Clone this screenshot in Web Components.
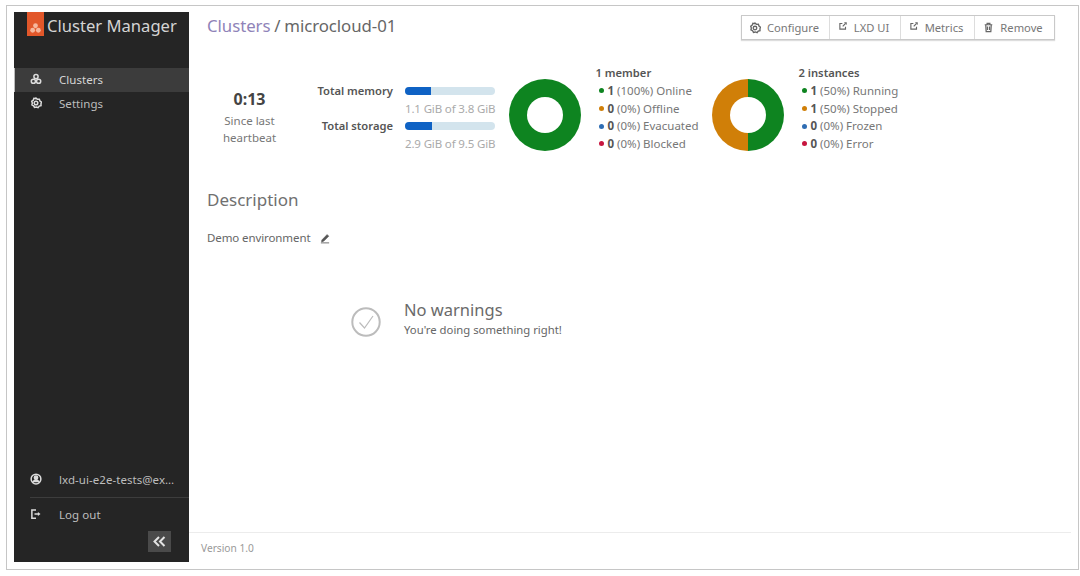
<!DOCTYPE html>
<html lang="en">
<head>
<meta charset="utf-8">
<title>Cluster Manager</title>
<style>
  html, body { margin: 0; height: 100%; background: #fff; }
  body { font-family: "Noto Sans", "Open Sans", sans-serif; color: #555; }
</style>
</head>
<body>
<app-shell>
  <side-bar slot="side">
    <nav-item slot="top" icon="clusters" active>Clusters</nav-item>
    <nav-item slot="top" icon="settings">Settings</nav-item>
    <nav-item slot="bottom" icon="user">lxd-ui-e2e-tests@ex…</nav-item>
    <nav-item slot="logout" icon="logout">Log out</nav-item>
  </side-bar>
  <page-head>
    <action-btn icon="settings" width="87">Configure</action-btn>
    <action-btn icon="external" width="71">LXD UI</action-btn>
    <action-btn icon="external" width="74">Metrics</action-btn>
    <action-btn icon="trash" width="80">Remove</action-btn>
  </page-head>
  <stats-row>
    <heart-beat></heart-beat>
    <usage-meters>
      <usage-meter label="Total memory" pct="29" detail="1.1 GiB of 3.8 GiB"></usage-meter>
      <usage-meter label="Total storage" pct="30" detail="2.9 GiB of 9.5 GiB"></usage-meter>
    </usage-meters>
    <donut-stat title="1 member" slices="100,0" rows="g|1|(100%) Online;o|0|(0%) Offline;b|0|(0%) Evacuated;r|0|(0%) Blocked"></donut-stat>
    <donut-stat title="2 instances" slices="50,50" rows="g|1|(50%) Running;o|1|(50%) Stopped;b|0|(0%) Frozen;r|0|(0%) Error"></donut-stat>
  </stats-row>
  <desc-block></desc-block>
  <empty-state></empty-state>
  <page-foot slot="foot">Version 1.0</page-foot>
</app-shell>

<script>
const ICONS = {
  clusters: '<circle cx="8" cy="4.800" r="2.800" fill="none"/><circle cx="4.500" cy="11" r="2.800" fill="none"/><circle cx="11.500" cy="11" r="2.800" fill="none"/>',
  settings: '<path d="M8 1.500l2 1.600 2.500-.2.800 2.400 2 1.500L14.600 9l.1 2.500-2.400.7-1.500 2-2.300-.9-2.500.6-1.200-2.200-2.200-1.200.5-2.500-.8-2.400 2-1.400.9-2.400 2.500.3z" fill="none"/><circle cx="8" cy="8" r="2.400" fill="none"/>',
  user: '<circle cx="8" cy="8" r="6.500" fill="none"/><circle cx="8" cy="6.300" r="2.200"/><path d="M3.800 12.400c.8-2 2.300-3 4.200-3s3.400 1 4.200 3"/>',
  logout: '<path d="M8 2.500H2.500v11H8" fill="none"/><path d="M6 8h6" fill="none"/><path d="M10.500 5.200L14 8l-3.500 2.800z" stroke="none"/>',
  external: '<path d="M7 4H3v9h9V9" fill="none"/><path d="M7.500 8.500L12 4" fill="none"/><path d="M9.500 2H14v4.500z" stroke="none"/>',
  trash: '<path d="M2.500 4h11M6 4V2h4v2M4 4l.6 10h6.800L12 4" fill="none"/><path d="M6.500 6.500v5M9.500 6.500v5" fill="none"/>',
  pencil: '<path d="M4 10.500L10.800 3.500l2 2L6 12.300l-2.500.5z"/><path d="M2.500 14.500h11" fill="none"/>',
};

const svgIcon = (name, size, color, sw = 1.5) =>
  `<svg width="${size}" height="${size}" viewBox="0 0 16 16" fill="${color}" stroke="${color}" stroke-width="${sw}">${ICONS[name]}</svg>`;

class AppShell extends HTMLElement {
  constructor() {
    super();
    this.attachShadow({ mode: 'open' });
    this.shadowRoot.innerHTML = `
      <style>
        :host { display: block; box-sizing: border-box; height: 576px; padding: 5px 1px 6px 6px; }
        .frame {
          box-sizing: border-box; height: 100%;
          border: 1px solid #c6c6c6; padding: 6px 7px 7px;
          display: flex;
        }
        .content { flex: 1; min-width: 0; display: flex; flex-direction: column; }
        .main { flex: 1; min-height: 0; padding: 3px 16px 0 18px; }
      </style>
      <div class="frame">
        <slot name="side"></slot>
        <div class="content">
          <div class="main"><slot></slot></div>
          <slot name="foot"></slot>
        </div>
      </div>`;
  }
}

class SideBar extends HTMLElement {
  constructor() {
    super();
    this.attachShadow({ mode: 'open' });
    this.shadowRoot.innerHTML = `
      <style>
        :host { display: flex; flex-direction: column; width: 175px; background: #252525; color: #d0d0d0; flex: none; }
        .brand { display: flex; align-items: center; gap: 3px; height: 24px; padding-left: 13px; }
        .logo { width: 17px; height: 24px; background: #e2572a; display: flex; align-items: flex-end; justify-content: center; padding-bottom: 2px; box-sizing: border-box; }
        .name { font-size: 16.600px; color: #d4d4d4; white-space: nowrap; line-height: 24px; margin-top: 4px; }
        .top { margin-top: 32px; flex: 1; }
        hr { border: 0; border-top: 1px solid #3d3d3d; margin: 6px 0 4px 16px; width: calc(100% - 16px); }
        .collapse { align-self: flex-end; width: 23px; height: 21px; margin: 5px 18px 10px 0; background: #4a4a4a; display: grid; place-items: center; }
      </style>
      <div class="brand">
        <span class="logo">
          <svg width="13" height="12" viewBox="0 0 16 16" fill="#f6b79d"><circle cx="8" cy="5" r="3.200"/><circle cx="4.200" cy="11" r="3.200"/><circle cx="11.800" cy="11" r="3.200"/></svg>
        </span>
        <span class="name">Cluster Manager</span>
      </div>
      <div class="top"><slot name="top"></slot></div>
      <slot name="bottom"></slot>
      <hr>
      <slot name="logout"></slot>
      <div class="collapse">
        <svg width="13" height="11" viewBox="0 0 13 11" fill="none" stroke="#e4e4e4" stroke-width="2"><path d="M6 1L1.500 5.500 6 10M11.500 1L7 5.500l4.500 4.500"/></svg>
      </div>`;
  }
}

class NavItem extends HTMLElement {
  constructor() {
    super();
    this.attachShadow({ mode: 'open' });
  }

  connectedCallback() {
    this.shadowRoot.innerHTML = `
      <style>
        :host { display: flex; align-items: center; box-sizing: border-box; height: 24px; padding-left: 16px; font-size: 11.500px; color: #bdbdbd; white-space: nowrap; letter-spacing: .05px; }
        :host([slot="top"]) { padding-bottom: 2px; }
        :host([active]) { background: #3c3c3c; box-shadow: inset 1px 0 0 #bbb; color: #d6d6d6; }
        svg { flex: none; margin-right: 17px; }
      </style>
      ${svgIcon(this.getAttribute('icon'), 12, '#dcdcdc', 2)}
      <slot></slot>`;
  }
}

class PageHead extends HTMLElement {
  constructor() {
    super();
    this.attachShadow({ mode: 'open' });
    this.shadowRoot.innerHTML = `
      <style>
        :host { display: flex; justify-content: space-between; align-items: flex-start; }
        h1 { margin: -1px 0 0; font-weight: 400; font-size: 16.800px; line-height: 24px; color: #666; letter-spacing: -.05px; word-spacing: -.5px; }
        a { color: #8f83b8; text-decoration: none; }
        .group { display: flex; height: 23px; border: 1px solid #c9c9c9; box-shadow: 0 1px 1px #ddd; }
      </style>
      <h1><a href="#">Clusters</a> / microcloud-01</h1>
      <div class="group"><slot></slot></div>`;
  }
}

class ActionBtn extends HTMLElement {
  constructor() {
    super();
    this.attachShadow({ mode: 'open' });
  }

  connectedCallback() {
    const icon = this.getAttribute('icon');
    const size = icon === 'settings' ? 12 : icon === 'trash' ? 11 : 10;
    this.shadowRoot.innerHTML = `
      <style>
        :host { display: flex; align-items: center; justify-content: center; gap: 6px; box-sizing: border-box; width: ${this.getAttribute('width')}px; padding-right: 3px;
                font-size: 11.200px; color: #777; border-left: 1px solid #ddd; }
        :host(:first-child) { border-left: 0; }
        svg { flex: none; ${icon === 'external' ? 'margin-top: -3px;' : ''} }
      </style>
      ${svgIcon(icon, size, '#666', 1.800)}
      <slot></slot>`;
  }
}

class StatsRow extends HTMLElement {
  constructor() {
    super();
    this.attachShadow({ mode: 'open' });
    this.shadowRoot.innerHTML = `
      <style>:host { display: flex; align-items: flex-start; margin-top: 23px; height: 92px; }</style>
      <slot></slot>`;
  }
}

class HeartBeat extends HTMLElement {
  constructor() {
    super();
    this.attachShadow({ mode: 'open' });
    this.shadowRoot.innerHTML = `
      <style>
        :host { display: block; width: 85px; margin-right: 8px; padding-top: 25px; text-align: center; font-size: 11.500px; line-height: 17px; color: #777; }
        b { display: block; font-size: 16px; line-height: 22px; margin-bottom: 2px; color: #444; font-weight: 700; }
      </style>
      <b>0:13</b>Since last<br>heartbeat`;
  }
}

class UsageMeters extends HTMLElement {
  constructor() {
    super();
    this.attachShadow({ mode: 'open' });
    this.shadowRoot.innerHTML = `
      <style>:host { display: flex; flex-direction: column; padding-top: 19px; margin-right: 14px; }</style>
      <slot></slot>`;
  }
}

class UsageMeter extends HTMLElement {
  constructor() {
    super();
    this.attachShadow({ mode: 'open' });
  }

  connectedCallback() {
    this.shadowRoot.innerHTML = `
      <style>
        :host { display: grid; grid-template-columns: 93px 90px; grid-template-rows: 17.500px 17.500px; column-gap: 12px; font-size: 11.500px; line-height: 17.500px; }
        .label { font-size: 11.200px; text-align: right; font-weight: 600; color: #555; white-space: nowrap; }
        .bar { grid-column: 2; align-self: center; height: 8px; border-radius: 4px; background: #d3e4ed; overflow: hidden; }
        .bar i { display: block; height: 100%; background: #0f62c4; width: ${this.getAttribute('pct')}%; }
        .detail { grid-column: 2; color: #aaa; white-space: nowrap; letter-spacing: -.15px; }
      </style>
      <span class="label">${this.getAttribute('label')}</span>
      <span class="bar"><i></i></span>
      <span class="detail">${this.getAttribute('detail')}</span>`;
  }
}

const DOT = { g: '#0e8420', o: '#d07f08', b: '#2f6db3', r: '#c7163f' };

class DonutStat extends HTMLElement {
  constructor() {
    super();
    this.attachShadow({ mode: 'open' });
  }

  connectedCallback() {
    const [green, orange] = this.getAttribute('slices').split(',').map(Number);
    const rows = this.getAttribute('rows').split(';').map((row) => {
      const [c, n, text] = row.split('|');
      return `<li><i style="background:${DOT[c]}"></i><b>${n}</b> ${text}</li>`;
    }).join('');
    this.shadowRoot.innerHTML = `
      <style>
        :host { display: flex; width: 203px; font-size: 11.500px; color: #777; }
        .ring { flex: none; width: 72px; height: 72px; margin-top: 16px; border-radius: 50%;
                background: conic-gradient(#0e8420 0 ${green}%, #d07f08 ${green}% ${green + orange}%); display: grid; place-items: center; }
        .ring::after { content: ""; width: 36px; height: 36px; border-radius: 50%; background: #fff; }
        .legend { margin-left: 14.500px; }
        .title { font-size: 11.200px; font-weight: 600; color: #555; line-height: 18px; margin-top: 1px; }
        ul { list-style: none; margin: 0; padding: 0 0 0 3px; }
        li { line-height: 17.700px; white-space: nowrap; display: flex; align-items: center; gap: 3px; }
        li i { width: 5px; height: 5px; border-radius: 50%; margin-right: 1px; }
        li b { color: #555; font-weight: 700; }
      </style>
      <div class="ring"></div>
      <div class="legend">
        <div class="title">${this.getAttribute('title')}</div>
        <ul>${rows}</ul>
      </div>`;
  }
}

class DescBlock extends HTMLElement {
  constructor() {
    super();
    this.attachShadow({ mode: 'open' });
    this.shadowRoot.innerHTML = `
      <style>
        :host { display: block; margin-top: 33px; }
        h2 { margin: 0; font-weight: 400; font-size: 17px; line-height: 24px; color: #707070; }
        p { margin: 17px 0 0; font-size: 11.500px; line-height: 18px; color: #666; display: flex; align-items: center; gap: 9px; letter-spacing: -.1px; }
      </style>
      <h2>Description</h2>
      <p>Demo environment ${svgIcon('pencil', 12, '#555', 1.100)}</p>`;
  }
}

class EmptyState extends HTMLElement {
  constructor() {
    super();
    this.attachShadow({ mode: 'open' });
    this.shadowRoot.innerHTML = `
      <style>
        :host { display: flex; align-items: center; gap: 22px; margin: 51px 0 0 143px; }
        h3 { margin: 0; font-weight: 400; font-size: 16.500px; line-height: 24px; color: #6a6a6a; }
        p { margin: 0; font-size: 11.300px; line-height: 16px; color: #666; }
        svg { margin-top: 7px; }
      </style>
      <svg width="32" height="32" viewBox="0 0 32 32" fill="none" stroke="#bcbcbc">
        <circle cx="16" cy="16" r="13.700" stroke-width="2"/>
        <path d="M9.500 16.500l5 5.500 8.500-12" stroke-width="1.200"/>
      </svg>
      <div><h3>No warnings</h3><p>You're doing something right!</p></div>`;
  }
}

class PageFoot extends HTMLElement {
  constructor() {
    super();
    this.attachShadow({ mode: 'open' });
    this.shadowRoot.innerHTML = `
      <style>
        :host { display: block; height: 29px; border-top: 1px solid #ececec; padding-left: 12px; font-size: 10.200px; line-height: 30px; color: #999; }
      </style>
      <slot></slot>`;
  }
}

customElements.define('app-shell', AppShell);
customElements.define('side-bar', SideBar);
customElements.define('nav-item', NavItem);
customElements.define('page-head', PageHead);
customElements.define('action-btn', ActionBtn);
customElements.define('stats-row', StatsRow);
customElements.define('heart-beat', HeartBeat);
customElements.define('usage-meters', UsageMeters);
customElements.define('usage-meter', UsageMeter);
customElements.define('donut-stat', DonutStat);
customElements.define('desc-block', DescBlock);
customElements.define('empty-state', EmptyState);
customElements.define('page-foot', PageFoot);
</script>
</body>
</html>
